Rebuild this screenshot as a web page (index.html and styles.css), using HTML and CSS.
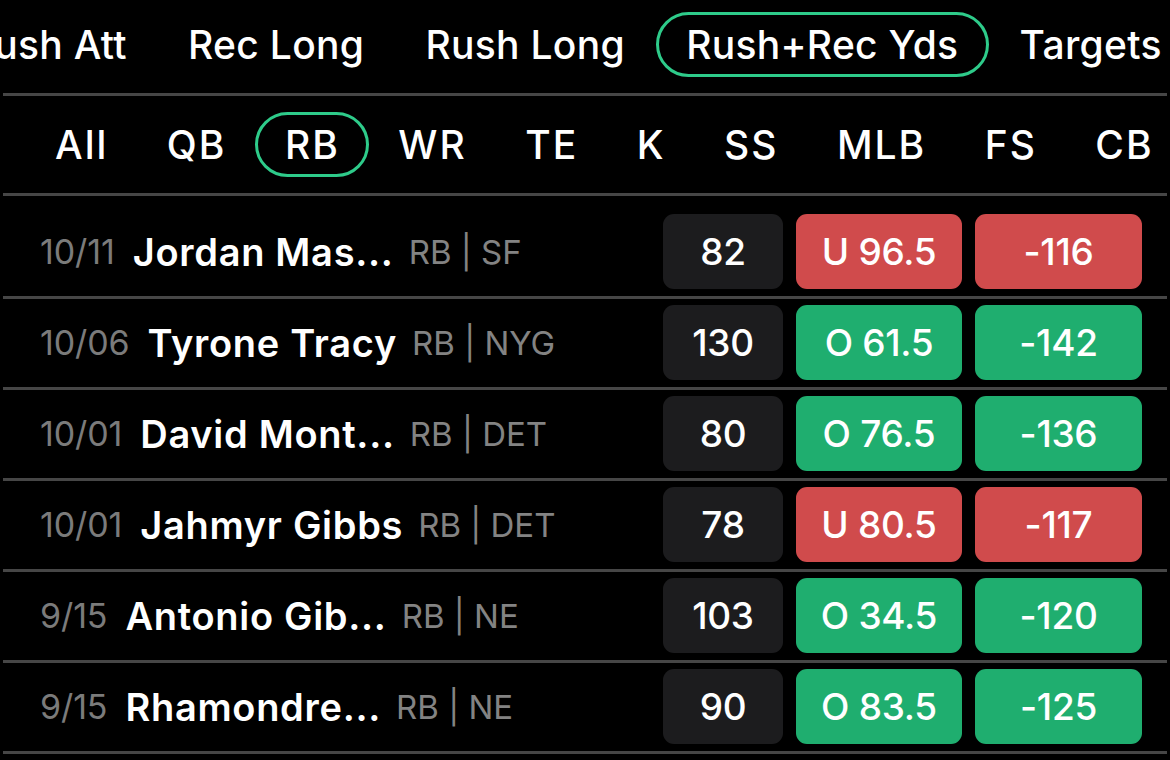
FILE: index.html
```html
<!DOCTYPE html>
<html>
<head>
<meta charset="utf-8">
<link rel="stylesheet" href="styles.css">
</head>
<body>
<div class="screen">
  <nav class="tabs-top">
    <div class="tab">Rush Att</div>
    <div class="tab">Rec Long</div>
    <div class="tab">Rush Long</div>
    <div class="tab active">Rush+Rec Yds</div>
    <div class="tab">Targets</div>
  </nav>
  <div class="rule"></div>
  <nav class="tabs-pos">
    <div class="tab">All</div>
    <div class="tab">QB</div>
    <div class="tab active">RB</div>
    <div class="tab">WR</div>
    <div class="tab">TE</div>
    <div class="tab">K</div>
    <div class="tab">SS</div>
    <div class="tab">MLB</div>
    <div class="tab">FS</div>
    <div class="tab">CB</div>
  </nav>
  <div class="rule"></div>
  <div class="list">
    <div class="row">
      <span class="date">10/11</span><span class="name">Jordan Mas...</span><span class="meta">RB | SF</span>
      <div class="cells"><div class="cell stat">82</div><div class="cell line under">U 96.5</div><div class="cell odds under">-116</div></div>
    </div>
    <div class="rule"></div>
    <div class="row">
      <span class="date">10/06</span><span class="name">Tyrone Tracy</span><span class="meta">RB | NYG</span>
      <div class="cells"><div class="cell stat">130</div><div class="cell line over">O 61.5</div><div class="cell odds over">-142</div></div>
    </div>
    <div class="rule"></div>
    <div class="row">
      <span class="date">10/01</span><span class="name">David Mont...</span><span class="meta">RB | DET</span>
      <div class="cells"><div class="cell stat">80</div><div class="cell line over">O 76.5</div><div class="cell odds over">-136</div></div>
    </div>
    <div class="rule"></div>
    <div class="row">
      <span class="date">10/01</span><span class="name">Jahmyr Gibbs</span><span class="meta">RB | DET</span>
      <div class="cells"><div class="cell stat">78</div><div class="cell line under">U 80.5</div><div class="cell odds under">-117</div></div>
    </div>
    <div class="rule"></div>
    <div class="row">
      <span class="date">9/15</span><span class="name">Antonio Gib...</span><span class="meta">RB | NE</span>
      <div class="cells"><div class="cell stat">103</div><div class="cell line over">O 34.5</div><div class="cell odds over">-120</div></div>
    </div>
    <div class="rule"></div>
    <div class="row">
      <span class="date">9/15</span><span class="name">Rhamondre...</span><span class="meta">RB | NE</span>
      <div class="cells"><div class="cell stat">90</div><div class="cell line over">O 83.5</div><div class="cell odds over">-125</div></div>
    </div>
    <div class="rule"></div>
  </div>
</div>
</body>
</html>
```
FILE: styles.css
```css
html, body {
  margin: 0;
  padding: 0;
  background: #000;
}
.screen {
  width: 1170px;
  height: 760px;
  overflow: hidden;
  background: #000;
  color: #fff;
  font-family: Inter, "Noto Sans", sans-serif;
}
.rule {
  height: 3px;
  margin: 0 3px;
  background: #464646;
}
.tabs-top, .tabs-pos {
  display: flex;
  align-items: flex-start;
  box-sizing: border-box;
  white-space: nowrap;
}
.tabs-top {
  height: 93px;
  padding-top: 12px;
  margin-left: -62px;
}
.tabs-pos {
  height: 97px;
  padding-top: 16px;
  padding-left: 25.5px;
}
.tab {
  box-sizing: border-box;
  height: 65px;
  line-height: 59px;
  padding: 0 27.6px;
  border: 3px solid transparent;
  border-radius: 33px;
  font-size: 39px;
  font-weight: 500;
  letter-spacing: 0.3px;
  flex: none;
}
.tabs-pos .tab {
  font-size: 39px;
  letter-spacing: 2px;
  padding: 0 26px 0 26.5px;
}
.tab.active {
  border-color: #2ecb8a;
}
.list {
  padding-top: 12px;
}
.row {
  display: flex;
  align-items: center;
  height: 88px;
  box-sizing: border-box;
  padding: 6px 28px 7px 40px;
  white-space: nowrap;
}
.date {
  font-size: 34px;
  color: #7b7b7b;
  letter-spacing: -0.1px;
}
.name {
  font-size: 38px;
  font-weight: 600;
  margin-left: 18px;
  letter-spacing: 0.7px;
}
.meta {
  font-size: 33px;
  color: #838383;
  margin-left: 15px;
}
.cells {
  display: flex;
  margin-left: auto;
  gap: 13px;
}
.cell {
  height: 75px;
  border-radius: 11px;
  display: flex;
  align-items: center;
  justify-content: center;
  font-size: 37px;
  font-weight: 500;
  letter-spacing: -0.3px;
}
.stat {
  width: 120px;
  background: #1c1c1e;
}
.line {
  width: 166px;
}
.odds {
  width: 167px;
}
.under {
  background: #d04b4c;
}
.over {
  background: #1fae6f;
}
```
